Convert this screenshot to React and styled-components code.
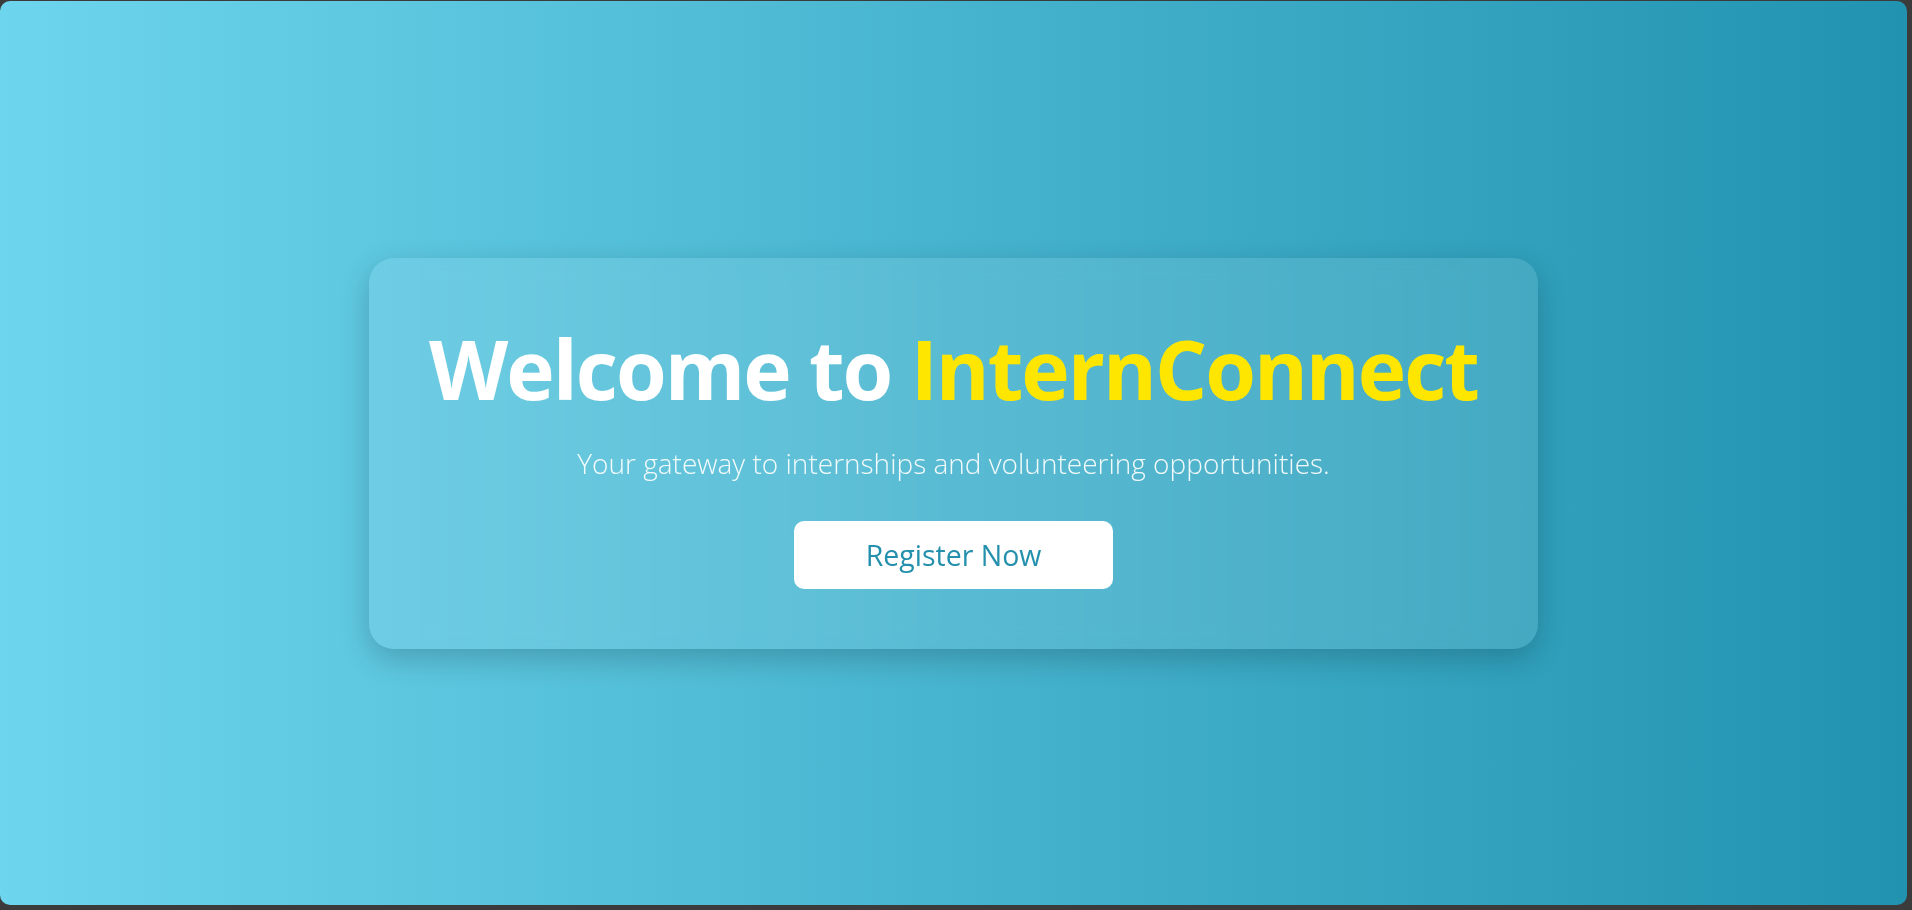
import React from "react";
import styled, { createGlobalStyle } from "styled-components";

const GlobalStyle = createGlobalStyle`
  * {
    box-sizing: border-box;
  }

  html,
  body {
    margin: 0;
    padding: 0;
    height: 100%;
    background-color: #3b3b3b;
    font-family: "Open Sans", "Noto Sans", "Liberation Sans", sans-serif;
  }
`;

const Frame = styled.div`
  height: 100vh;
  padding: 1px 5px 5px 0;
  background-color: #3b3b3b;
`;

const Hero = styled.section`
  height: 100%;
  border-radius: 10px;
  background: linear-gradient(to right, #6dd5ed, #2193b0);
  display: flex;
  align-items: center;
  justify-content: center;
`;

const Card = styled.div`
  display: flex;
  flex-direction: column;
  align-items: center;
  padding: 60px;
  border-radius: 25px;
  background-color: rgba(255, 255, 255, 0.1);
  box-shadow: 0 10px 30px rgba(0, 0, 0, 0.2);
  backdrop-filter: blur(10px);
  text-align: center;
`;

const Title = styled.h1`
  margin: 0;
  font-size: 82px;
  line-height: 100px;
  font-weight: 700;
  letter-spacing: -2px;
  color: #ffffff;
  white-space: nowrap;
`;

const Highlight = styled.span`
  color: #ffe600;
`;

const Subtitle = styled.p`
  margin: 25px 0 0 0;
  font-size: 28px;
  line-height: 40px;
  font-weight: 300;
  color: rgba(255, 255, 255, 0.92);
  white-space: nowrap;
`;

const RegisterButton = styled.button`
  margin-top: 38px;
  height: 68px;
  width: 319px;
  padding: 0;
  border: none;
  border-radius: 10px;
  background-color: #ffffff;
  color: #2490ad;
  font-family: inherit;
  font-size: 28.5px;
  font-weight: 400;
  cursor: pointer;
  transition: transform 0.3s ease;

  &:hover {
    transform: translateY(-2px);
  }
`;

const App = () => {
  return (
    <>
      <GlobalStyle />
      <Frame>
        <Hero>
          <Card>
            <Title>
              Welcome to <Highlight>InternConnect</Highlight>
            </Title>
            <Subtitle>
              Your gateway to internships and volunteering opportunities.
            </Subtitle>
            <RegisterButton>Register Now</RegisterButton>
          </Card>
        </Hero>
      </Frame>
    </>
  );
};

export default App;
